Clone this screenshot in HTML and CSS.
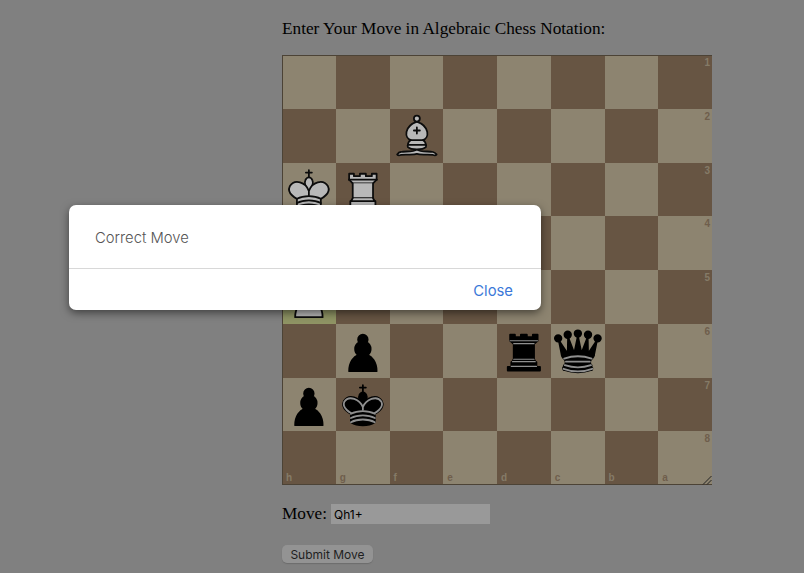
FILE: index.html
```html
<!DOCTYPE html>
<html lang="en">
<head>
    <meta charset="UTF-8">
    <meta name="viewport" content="width=device-width, initial-scale=1.0">
    <title>Chess Notation</title>
    <link rel="stylesheet" href="styles.css">
</head>
<body>

<svg class="defs" width="0" height="0">
    <symbol id="white-king" viewBox="0 0 45 45">
        <g class="piece-white">
            <path class="line" d="M22.5 11.63V6M20 8h5"/>
            <path d="M22.5 25s4.5-7.5 3-10.5c0 0-1-2.5-3-2.5s-3 2.5-3 2.5c-1.5 3 3 10.5 3 10.5"/>
            <path d="M12.5 37c5.5 3.5 14.5 3.5 20 0v-7s9-4.5 6-10.5c-4-6.5-13.5-3.5-16 4V27v-3.5c-2.5-7.5-12-10.5-16-4-3 6 6 10.5 6 10.5v7"/>
            <path class="line" d="M12.5 30c5.5-3 14.5-3 20 0m-20 3.5c5.5-3 14.5-3 20 0m-20 3.5c5.5-3 14.5-3 20 0"/>
        </g>
    </symbol>
    <symbol id="white-rook" viewBox="0 0 45 45">
        <g class="piece-white">
            <path d="M9 39h27v-3H9zm3-3v-4h21v4zm-1-22V9h4v2h5V9h5v2h5V9h4v5"/>
            <path d="m34 14-3 3H14l-3-3"/>
            <path d="M31 17v12.5H14V17"/>
            <path d="m31 29.5 1.5 2.5h-20l1.5-2.5"/>
            <path class="line" d="M11 14h23"/>
        </g>
    </symbol>
    <symbol id="white-bishop" viewBox="0 0 45 45">
        <g class="piece-white">
            <path d="M9 36c3.39-.97 10.11.43 13.5-2 3.39 2.43 10.11 1.03 13.5 2 0 0 1.65.54 3 2-.68.97-1.65.99-3 .5-3.39-.97-10.11.46-13.5-1-3.39 1.46-10.11.03-13.5 1-1.354.49-2.323.47-3-.5 1.354-1.94 3-2 3-2z"/>
            <path d="M15 32c2.5 2.5 12.5 2.5 15 0 .5-1.5 0-2 0-2 0-2.5-2.5-4-2.5-4 5.5-1.5 6-11.5-5-15.5-11 4-10.5 14-5 15.5 0 0-2.5 1.5-2.5 4 0 0-.5.5 0 2z"/>
            <path d="M25 8a2.5 2.5 0 1 1-5 0 2.5 2.5 0 1 1 5 0z"/>
            <path class="line" d="M17.5 26h10M15 30h15m-7.5-14.5v5M20 18h5"/>
        </g>
    </symbol>
    <symbol id="white-pawn" viewBox="0 0 45 45">
        <g class="piece-white">
            <path d="M22.5 9c-2.21 0-4 1.79-4 4 0 .89.29 1.71.78 2.38C17.33 16.5 16 18.59 16 21c0 2.03.94 3.84 2.41 5.03-3 1.06-7.41 5.55-7.41 13.47h23c0-7.92-4.41-12.41-7.41-13.47 1.47-1.19 2.41-3 2.41-5.03 0-2.41-1.33-4.5-3.28-5.62.49-.67.78-1.49.78-2.38 0-2.21-1.79-4-4-4z"/>
        </g>
    </symbol>
    <symbol id="black-king" viewBox="0 0 45 45">
        <g class="piece-black">
            <path class="line" d="M22.5 11.63V6M20 8h5"/>
            <path d="M22.5 25s4.5-7.5 3-10.5c0 0-1-2.5-3-2.5s-3 2.5-3 2.5c-1.5 3 3 10.5 3 10.5"/>
            <path d="M12.5 37c5.5 3.5 14.5 3.5 20 0v-7s9-4.5 6-10.5c-4-6.5-13.5-3.5-16 4V27v-3.5c-2.5-7.5-12-10.5-16-4-3 6 6 10.5 6 10.5v7"/>
            <path class="line shine" d="M32 29.5s8.5-4 6.03-9.65C34.15 14 25 18 22.5 24.5v2.1-2.1C20 18 10.85 14 6.97 19.85 4.5 25.5 13 29.5 13 29.5"/>
            <path class="line shine" d="M12.5 30c5.5-3 14.5-3 20 0m-20 3.5c5.5-3 14.5-3 20 0m-20 3.5c5.5-3 14.5-3 20 0"/>
        </g>
    </symbol>
    <symbol id="black-queen" viewBox="0 0 45 45">
        <g class="piece-black">
            <circle cx="6" cy="12" r="2.75"/>
            <circle cx="14" cy="9" r="2.75"/>
            <circle cx="22.5" cy="8" r="2.75"/>
            <circle cx="31" cy="9" r="2.75"/>
            <circle cx="39" cy="12" r="2.75"/>
            <path d="M9 26c8.5-1.5 21-1.5 27 0l2.5-12.5L31 25l-.3-14.1-5.2 13.6-3-14.5-3 14.5-5.2-13.6L14 25 6.5 13.5 9 26z"/>
            <path d="M9 26c0 2 1.5 2 2.5 4 1 1.5 1 1 .5 3.5-1.5 1-1.5 2.5-1.5 2.5-1.5 1.5.5 2.5.5 2.5 6.5 1 16.5 1 23 0 0 0 1.5-1 0-2.5 0 0 .5-1.5-1-2.5-.5-2.5-.5-2 .5-3.5 1-2 2.5-2 2.5-4-8.5-1.5-18.5-1.5-27 0z"/>
            <path class="line" d="M11 38.5a35 35 1 0 0 23 0"/>
            <path class="line shine" d="M11 29a35 35 1 0 1 23 0m-21.5 2.5h20m-21 3a35 35 1 0 0 22 0m-23 3a35 35 1 0 0 24 0"/>
        </g>
    </symbol>
    <symbol id="black-rook" viewBox="0 0 45 45">
        <g class="piece-black">
            <path d="M9 39h27v-3H9zm3.5-7 1.5-2.5h17l1.5 2.5zm-.5 4v-4h21v4z"/>
            <path d="M14 29.5v-13h17v13z"/>
            <path d="M14 16.5 11 14h23l-3 2.5zM11 14V9h4v2h5V9h5v2h5V9h4v5z"/>
            <path class="line shine thin" d="M12 35.5h21m-20-4h19m-18-2h17m-17-13h17M11 14h23"/>
        </g>
    </symbol>
    <symbol id="black-pawn" viewBox="0 0 45 45">
        <g class="piece-black">
            <path d="M22.5 9c-2.21 0-4 1.79-4 4 0 .89.29 1.71.78 2.38C17.33 16.5 16 18.59 16 21c0 2.03.94 3.84 2.41 5.03-3 1.06-7.41 5.55-7.41 13.47h23c0-7.92-4.41-12.41-7.41-13.47 1.47-1.19 2.41-3 2.41-5.03 0-2.41-1.33-4.5-3.28-5.62.49-.67.78-1.49.78-2.38 0-2.21-1.79-4-4-4z"/>
        </g>
    </symbol>
</svg>

<div class="page">
    <p class="prompt">Enter Your Move in Algebraic Chess Notation:</p>

    <div class="board">
        <div class="sq light"></div><div class="sq dark"></div><div class="sq light"></div><div class="sq dark"></div><div class="sq light"></div><div class="sq dark"></div><div class="sq light"></div><div class="sq dark"><span class="rank">1</span></div>

        <div class="sq dark"></div><div class="sq light"></div><div class="sq dark"><svg class="piece"><use href="#white-bishop"/></svg></div><div class="sq light"></div><div class="sq dark"></div><div class="sq light"></div><div class="sq dark"></div><div class="sq light"><span class="rank">2</span></div>

        <div class="sq light"><svg class="piece"><use href="#white-king"/></svg></div><div class="sq dark"><svg class="piece"><use href="#white-rook"/></svg></div><div class="sq light"></div><div class="sq dark"></div><div class="sq light"></div><div class="sq dark"></div><div class="sq light"></div><div class="sq dark"><span class="rank">3</span></div>

        <div class="sq dark"></div><div class="sq light"></div><div class="sq dark"></div><div class="sq light"></div><div class="sq dark"></div><div class="sq light"></div><div class="sq dark"></div><div class="sq light"><span class="rank">4</span></div>

        <div class="sq last-move"><svg class="piece"><use href="#white-pawn"/></svg></div><div class="sq dark"></div><div class="sq light"></div><div class="sq dark"></div><div class="sq light"></div><div class="sq dark"></div><div class="sq light"></div><div class="sq dark"><span class="rank">5</span></div>

        <div class="sq dark"></div><div class="sq light"><svg class="piece"><use href="#black-pawn"/></svg></div><div class="sq dark"></div><div class="sq light"></div><div class="sq dark"><svg class="piece"><use href="#black-rook"/></svg></div><div class="sq light"><svg class="piece"><use href="#black-queen"/></svg></div><div class="sq dark"></div><div class="sq light"><span class="rank">6</span></div>

        <div class="sq light"><svg class="piece"><use href="#black-pawn"/></svg></div><div class="sq dark"><svg class="piece"><use href="#black-king"/></svg></div><div class="sq light"></div><div class="sq dark"></div><div class="sq light"></div><div class="sq dark"></div><div class="sq light"></div><div class="sq dark"><span class="rank">7</span></div>

        <div class="sq dark"><span class="file">h</span></div><div class="sq light"><span class="file">g</span></div><div class="sq dark"><span class="file">f</span></div><div class="sq light"><span class="file">e</span></div><div class="sq dark"><span class="file">d</span></div><div class="sq light"><span class="file">c</span></div><div class="sq dark"><span class="file">b</span></div><div class="sq light"><span class="rank">8</span><span class="file">a</span></div>

        <svg class="grip" viewBox="0 0 10 10"><path d="M1 9.5 9.5 1M5 9.5 9.5 5"/></svg>
    </div>

    <div class="move-row">
        <label for="move">Move:</label>
        <input type="text" id="move" value="Qh1+">
    </div>
    <button class="submit">Submit Move</button>
</div>

<div class="modal">
    <div class="modal-body">Correct Move</div>
    <div class="modal-footer"><span class="modal-close">Close</span></div>
</div>

</body>
</html>
```

FILE: styles.css
```css
html, body {
    height: 100%;
}
body {
    margin: 0;
    background-color: #808080; /* page seen through the modal backdrop */
    color: #000000;
    font-family: "Liberation Serif", serif;
    overflow: hidden;
}
.defs {
    position: absolute;
}
.page {
    margin-left: 282px;
    width: 430px;
    padding-top: 18px;
}
.prompt {
    margin: 0 0 16px;
    font-size: 17.25px;
    line-height: 21px;
}

/* board */
.board {
    position: relative;
    display: grid;
    grid-template-columns: repeat(8, 53.75px);
    grid-template-rows: repeat(8, 53.75px);
    width: 430px;
    height: 430px;
}
.board::after {
    content: "";
    position: absolute;
    inset: 0;
    border: solid #4c4336;
    border-width: 1px 0 1px 1px;
}
.sq {
    position: relative;
    min-height: 0;
}
.light {
    background-color: #8d8470;
}
.dark {
    background-color: #675543;
}
.last-move {
    background-color: #8f9464;
}
.rank, .file {
    position: absolute;
    font-family: "Liberation Sans", sans-serif;
    font-size: 10px;
    font-weight: bold;
    line-height: 10px;
}
.rank {
    top: 3px;
    right: 2px;
}
.file {
    bottom: 2px;
    left: 4px;
}
.light .rank, .light .file {
    color: #6f5e4c;
}
.dark .rank, .dark .file {
    color: #857b68;
}
.grip {
    position: absolute;
    right: 0;
    bottom: 0;
    z-index: 1;
    width: 10px;
    height: 10px;
    fill: none;
    stroke: #222222;
    stroke-width: 1;
}

/* pieces */
.piece {
    display: block;
    width: 100%;
    height: 100%;
}
.piece-white, .piece-black {
    stroke-width: 1.5;
    stroke-linecap: round;
    stroke-linejoin: round;
    fill-rule: evenodd;
}
.piece-white {
    fill: #b8b8b8;
    stroke: #0c0c0c;
}
.piece-black {
    fill: #000000;
    stroke: #000000;
}
.line {
    fill: none;
}
.shine {
    stroke: #8f8f8f;
}
.thin {
    stroke-width: 1;
}

/* form */
.move-row {
    display: flex;
    align-items: center;
    gap: 4px;
    margin-top: 19px;
}
.move-row label {
    font-size: 17.25px;
}
.move-row input {
    width: 159px;
    height: 20px;
    box-sizing: border-box;
    padding: 0 3px;
    border: none;
    background-color: #999999;
    color: #000000;
    font-family: "Inter", sans-serif;
    font-size: 12px;
}
.submit {
    display: block;
    width: 91px;
    height: 18px;
    margin-top: 21px;
    padding: 0;
    border: none;
    border-radius: 5px;
    background-color: #939393;
    box-shadow: 0 1px 1px #6c6c6c;
    color: #1f1f1f;
    font-family: "Inter", sans-serif;
    font-size: 12px;
}

/* modal */
.modal {
    position: absolute;
    top: 205px;
    left: 69px;
    width: 472px;
    height: 105px;
    border-radius: 7px;
    background-color: #ffffff;
    box-shadow: 0 3px 9px rgba(0, 0, 0, 0.5);
}
.modal-body {
    height: 64px;
    padding: 0 26px;
    box-sizing: border-box;
    border-bottom: 1px solid #d8d8d8;
    font-family: "Inter", sans-serif;
    font-size: 14.8px;
    font-weight: 300;
    line-height: 66px;
    color: #555555;
}
.modal-footer {
    display: flex;
    justify-content: flex-end;
    align-items: center;
    height: 43px;
    padding-right: 28px;
}
.modal-close {
    font-family: "Inter", sans-serif;
    font-size: 14.8px;
    color: #3b78d8;
}
```
